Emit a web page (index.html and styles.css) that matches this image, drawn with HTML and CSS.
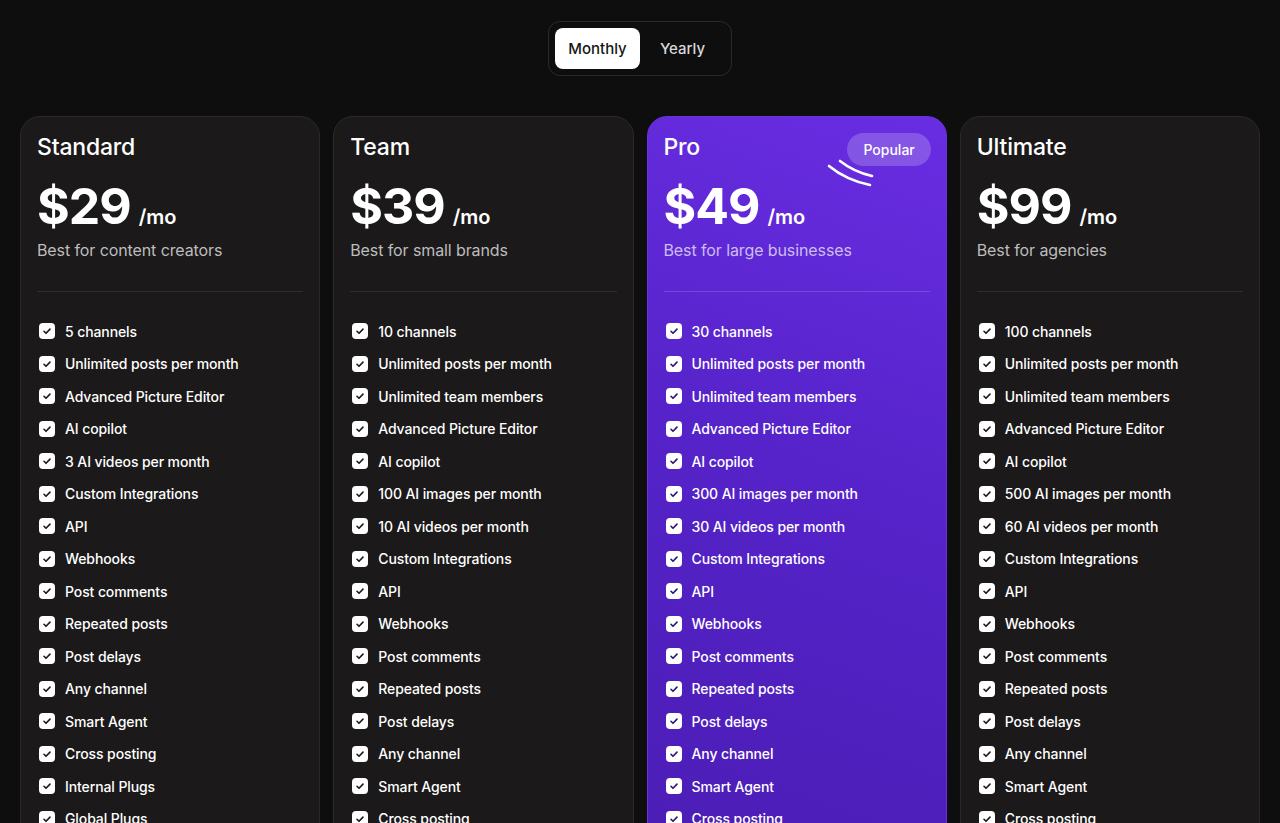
FILE: index.html
```html
<!DOCTYPE html>
<html lang="en">
<head>
<meta charset="utf-8">
<title>Pricing</title>
<link rel="stylesheet" href="styles.css">
</head>
<body>
<main class="page">
  <div class="toggle-wrap">
    <div class="toggle">
      <button class="toggle-btn active">Monthly</button>
      <button class="toggle-btn">Yearly</button>
    </div>
  </div>

  <section class="plans">
    <article class="card">
      <h2 class="plan-name">Standard</h2>
      <div class="price"><span class="amount">$29</span><span class="per">/mo</span></div>
      <p class="desc">Best for content creators</p>
      <hr class="divider">
      <ul class="features">
        <li><span class="check"><svg viewBox="0 0 16 16"><path d="M5 8.3l2 2 4-4.2"/></svg></span>5 channels</li>
        <li><span class="check"><svg viewBox="0 0 16 16"><path d="M5 8.3l2 2 4-4.2"/></svg></span>Unlimited posts per month</li>
        <li><span class="check"><svg viewBox="0 0 16 16"><path d="M5 8.3l2 2 4-4.2"/></svg></span>Advanced Picture Editor</li>
        <li><span class="check"><svg viewBox="0 0 16 16"><path d="M5 8.3l2 2 4-4.2"/></svg></span>AI copilot</li>
        <li><span class="check"><svg viewBox="0 0 16 16"><path d="M5 8.3l2 2 4-4.2"/></svg></span>3 AI videos per month</li>
        <li><span class="check"><svg viewBox="0 0 16 16"><path d="M5 8.3l2 2 4-4.2"/></svg></span>Custom Integrations</li>
        <li><span class="check"><svg viewBox="0 0 16 16"><path d="M5 8.3l2 2 4-4.2"/></svg></span>API</li>
        <li><span class="check"><svg viewBox="0 0 16 16"><path d="M5 8.3l2 2 4-4.2"/></svg></span>Webhooks</li>
        <li><span class="check"><svg viewBox="0 0 16 16"><path d="M5 8.3l2 2 4-4.2"/></svg></span>Post comments</li>
        <li><span class="check"><svg viewBox="0 0 16 16"><path d="M5 8.3l2 2 4-4.2"/></svg></span>Repeated posts</li>
        <li><span class="check"><svg viewBox="0 0 16 16"><path d="M5 8.3l2 2 4-4.2"/></svg></span>Post delays</li>
        <li><span class="check"><svg viewBox="0 0 16 16"><path d="M5 8.3l2 2 4-4.2"/></svg></span>Any channel</li>
        <li><span class="check"><svg viewBox="0 0 16 16"><path d="M5 8.3l2 2 4-4.2"/></svg></span>Smart Agent</li>
        <li><span class="check"><svg viewBox="0 0 16 16"><path d="M5 8.3l2 2 4-4.2"/></svg></span>Cross posting</li>
        <li><span class="check"><svg viewBox="0 0 16 16"><path d="M5 8.3l2 2 4-4.2"/></svg></span>Internal Plugs</li>
        <li><span class="check"><svg viewBox="0 0 16 16"><path d="M5 8.3l2 2 4-4.2"/></svg></span>Global Plugs</li>
      </ul>
    </article>

    <article class="card">
      <h2 class="plan-name">Team</h2>
      <div class="price"><span class="amount">$39</span><span class="per">/mo</span></div>
      <p class="desc">Best for small brands</p>
      <hr class="divider">
      <ul class="features">
        <li><span class="check"><svg viewBox="0 0 16 16"><path d="M5 8.3l2 2 4-4.2"/></svg></span>10 channels</li>
        <li><span class="check"><svg viewBox="0 0 16 16"><path d="M5 8.3l2 2 4-4.2"/></svg></span>Unlimited posts per month</li>
        <li><span class="check"><svg viewBox="0 0 16 16"><path d="M5 8.3l2 2 4-4.2"/></svg></span>Unlimited team members</li>
        <li><span class="check"><svg viewBox="0 0 16 16"><path d="M5 8.3l2 2 4-4.2"/></svg></span>Advanced Picture Editor</li>
        <li><span class="check"><svg viewBox="0 0 16 16"><path d="M5 8.3l2 2 4-4.2"/></svg></span>AI copilot</li>
        <li><span class="check"><svg viewBox="0 0 16 16"><path d="M5 8.3l2 2 4-4.2"/></svg></span>100 AI images per month</li>
        <li><span class="check"><svg viewBox="0 0 16 16"><path d="M5 8.3l2 2 4-4.2"/></svg></span>10 AI videos per month</li>
        <li><span class="check"><svg viewBox="0 0 16 16"><path d="M5 8.3l2 2 4-4.2"/></svg></span>Custom Integrations</li>
        <li><span class="check"><svg viewBox="0 0 16 16"><path d="M5 8.3l2 2 4-4.2"/></svg></span>API</li>
        <li><span class="check"><svg viewBox="0 0 16 16"><path d="M5 8.3l2 2 4-4.2"/></svg></span>Webhooks</li>
        <li><span class="check"><svg viewBox="0 0 16 16"><path d="M5 8.3l2 2 4-4.2"/></svg></span>Post comments</li>
        <li><span class="check"><svg viewBox="0 0 16 16"><path d="M5 8.3l2 2 4-4.2"/></svg></span>Repeated posts</li>
        <li><span class="check"><svg viewBox="0 0 16 16"><path d="M5 8.3l2 2 4-4.2"/></svg></span>Post delays</li>
        <li><span class="check"><svg viewBox="0 0 16 16"><path d="M5 8.3l2 2 4-4.2"/></svg></span>Any channel</li>
        <li><span class="check"><svg viewBox="0 0 16 16"><path d="M5 8.3l2 2 4-4.2"/></svg></span>Smart Agent</li>
        <li><span class="check"><svg viewBox="0 0 16 16"><path d="M5 8.3l2 2 4-4.2"/></svg></span>Cross posting</li>
        <li><span class="check"><svg viewBox="0 0 16 16"><path d="M5 8.3l2 2 4-4.2"/></svg></span>Internal Plugs</li>
        <li><span class="check"><svg viewBox="0 0 16 16"><path d="M5 8.3l2 2 4-4.2"/></svg></span>Global Plugs</li>
      </ul>
    </article>

    <article class="card card-pro">
      <span class="badge">Popular</span>
      <svg class="swoosh" viewBox="0 0 56 36"><path d="M5 13 Q 22 27 46 32"/><path d="M16 8 Q 30 19 48 23"/></svg>
      <h2 class="plan-name">Pro</h2>
      <div class="price"><span class="amount">$49</span><span class="per">/mo</span></div>
      <p class="desc">Best for large businesses</p>
      <hr class="divider">
      <ul class="features">
        <li><span class="check"><svg viewBox="0 0 16 16"><path d="M5 8.3l2 2 4-4.2"/></svg></span>30 channels</li>
        <li><span class="check"><svg viewBox="0 0 16 16"><path d="M5 8.3l2 2 4-4.2"/></svg></span>Unlimited posts per month</li>
        <li><span class="check"><svg viewBox="0 0 16 16"><path d="M5 8.3l2 2 4-4.2"/></svg></span>Unlimited team members</li>
        <li><span class="check"><svg viewBox="0 0 16 16"><path d="M5 8.3l2 2 4-4.2"/></svg></span>Advanced Picture Editor</li>
        <li><span class="check"><svg viewBox="0 0 16 16"><path d="M5 8.3l2 2 4-4.2"/></svg></span>AI copilot</li>
        <li><span class="check"><svg viewBox="0 0 16 16"><path d="M5 8.3l2 2 4-4.2"/></svg></span>300 AI images per month</li>
        <li><span class="check"><svg viewBox="0 0 16 16"><path d="M5 8.3l2 2 4-4.2"/></svg></span>30 AI videos per month</li>
        <li><span class="check"><svg viewBox="0 0 16 16"><path d="M5 8.3l2 2 4-4.2"/></svg></span>Custom Integrations</li>
        <li><span class="check"><svg viewBox="0 0 16 16"><path d="M5 8.3l2 2 4-4.2"/></svg></span>API</li>
        <li><span class="check"><svg viewBox="0 0 16 16"><path d="M5 8.3l2 2 4-4.2"/></svg></span>Webhooks</li>
        <li><span class="check"><svg viewBox="0 0 16 16"><path d="M5 8.3l2 2 4-4.2"/></svg></span>Post comments</li>
        <li><span class="check"><svg viewBox="0 0 16 16"><path d="M5 8.3l2 2 4-4.2"/></svg></span>Repeated posts</li>
        <li><span class="check"><svg viewBox="0 0 16 16"><path d="M5 8.3l2 2 4-4.2"/></svg></span>Post delays</li>
        <li><span class="check"><svg viewBox="0 0 16 16"><path d="M5 8.3l2 2 4-4.2"/></svg></span>Any channel</li>
        <li><span class="check"><svg viewBox="0 0 16 16"><path d="M5 8.3l2 2 4-4.2"/></svg></span>Smart Agent</li>
        <li><span class="check"><svg viewBox="0 0 16 16"><path d="M5 8.3l2 2 4-4.2"/></svg></span>Cross posting</li>
        <li><span class="check"><svg viewBox="0 0 16 16"><path d="M5 8.3l2 2 4-4.2"/></svg></span>Internal Plugs</li>
        <li><span class="check"><svg viewBox="0 0 16 16"><path d="M5 8.3l2 2 4-4.2"/></svg></span>Global Plugs</li>
      </ul>
    </article>

    <article class="card">
      <h2 class="plan-name">Ultimate</h2>
      <div class="price"><span class="amount">$99</span><span class="per">/mo</span></div>
      <p class="desc">Best for agencies</p>
      <hr class="divider">
      <ul class="features">
        <li><span class="check"><svg viewBox="0 0 16 16"><path d="M5 8.3l2 2 4-4.2"/></svg></span>100 channels</li>
        <li><span class="check"><svg viewBox="0 0 16 16"><path d="M5 8.3l2 2 4-4.2"/></svg></span>Unlimited posts per month</li>
        <li><span class="check"><svg viewBox="0 0 16 16"><path d="M5 8.3l2 2 4-4.2"/></svg></span>Unlimited team members</li>
        <li><span class="check"><svg viewBox="0 0 16 16"><path d="M5 8.3l2 2 4-4.2"/></svg></span>Advanced Picture Editor</li>
        <li><span class="check"><svg viewBox="0 0 16 16"><path d="M5 8.3l2 2 4-4.2"/></svg></span>AI copilot</li>
        <li><span class="check"><svg viewBox="0 0 16 16"><path d="M5 8.3l2 2 4-4.2"/></svg></span>500 AI images per month</li>
        <li><span class="check"><svg viewBox="0 0 16 16"><path d="M5 8.3l2 2 4-4.2"/></svg></span>60 AI videos per month</li>
        <li><span class="check"><svg viewBox="0 0 16 16"><path d="M5 8.3l2 2 4-4.2"/></svg></span>Custom Integrations</li>
        <li><span class="check"><svg viewBox="0 0 16 16"><path d="M5 8.3l2 2 4-4.2"/></svg></span>API</li>
        <li><span class="check"><svg viewBox="0 0 16 16"><path d="M5 8.3l2 2 4-4.2"/></svg></span>Webhooks</li>
        <li><span class="check"><svg viewBox="0 0 16 16"><path d="M5 8.3l2 2 4-4.2"/></svg></span>Post comments</li>
        <li><span class="check"><svg viewBox="0 0 16 16"><path d="M5 8.3l2 2 4-4.2"/></svg></span>Repeated posts</li>
        <li><span class="check"><svg viewBox="0 0 16 16"><path d="M5 8.3l2 2 4-4.2"/></svg></span>Post delays</li>
        <li><span class="check"><svg viewBox="0 0 16 16"><path d="M5 8.3l2 2 4-4.2"/></svg></span>Any channel</li>
        <li><span class="check"><svg viewBox="0 0 16 16"><path d="M5 8.3l2 2 4-4.2"/></svg></span>Smart Agent</li>
        <li><span class="check"><svg viewBox="0 0 16 16"><path d="M5 8.3l2 2 4-4.2"/></svg></span>Cross posting</li>
        <li><span class="check"><svg viewBox="0 0 16 16"><path d="M5 8.3l2 2 4-4.2"/></svg></span>Internal Plugs</li>
        <li><span class="check"><svg viewBox="0 0 16 16"><path d="M5 8.3l2 2 4-4.2"/></svg></span>Global Plugs</li>
      </ul>
    </article>
  </section>
</main>
</body>
</html>
```

FILE: styles.css
```css
* { box-sizing: border-box; }

html, body {
  margin: 0;
  padding: 0;
  background: #0e0e0e;
  color: #fff;
  font-family: Inter, "Noto Sans", "Liberation Sans", sans-serif;
}

.page {
  padding: 21px 20px 40px;
}

.toggle-wrap {
  display: flex;
  justify-content: center;
  margin-bottom: 40px;
}

.toggle {
  display: flex;
  padding: 6px;
  border: 1px solid #2a2a2a;
  border-radius: 12px;
  background: #0e0e0e;
}

.toggle-btn {
  width: 85px;
  height: 41px;
  border: 0;
  border-radius: 8px;
  background: transparent;
  color: #d9d9d9;
  font-family: inherit;
  font-size: 15px;
  font-weight: 500;
  cursor: pointer;
}

.toggle-btn.active {
  background: #fff;
  color: #161616;
}

.plans {
  display: grid;
  grid-template-columns: repeat(4, 1fr);
  gap: 13px;
  align-items: start;
}

.card {
  position: relative;
  background: #1b1919;
  border: 1px solid #2b2a2a;
  border-radius: 20px;
  padding: 14px 16px 24px;
}

.card-pro {
  background: linear-gradient(200deg, #692de2 0%, #5523c9 45%, #4a1cb2 100%);
  border-color: #6832dc;
}

.plan-name {
  margin: 0;
  font-size: 23px;
  line-height: 32px;
  font-weight: 500;
  letter-spacing: -0.2px;
}

.price {
  display: flex;
  align-items: baseline;
  gap: 8px;
  margin-top: 15px;
}

.amount {
  font-size: 50px;
  line-height: 56px;
  font-weight: 700;
  letter-spacing: -1px;
}

.per {
  font-size: 20px;
  font-weight: 600;
}

.desc {
  margin: 5px 0 0;
  font-size: 16px;
  line-height: 22px;
  color: #bdbdbd;
  letter-spacing: -0.1px;
}

.card-pro .desc { color: #cdbdf3; }

.divider {
  margin: 30px 0 0;
  border: 0;
  border-top: 1px solid #2e2d2d;
}

.card-pro .divider { border-top-color: rgba(255,255,255,0.16); }

.features {
  list-style: none;
  margin: 29px 0 0;
  padding: 0;
  display: flex;
  flex-direction: column;
  gap: 12.5px;
}

.features li {
  display: flex;
  align-items: center;
  gap: 10px;
  height: 20px;
  font-size: 14px;
  font-weight: 500;
  letter-spacing: -0.1px;
  padding-left: 2px;
}

.check {
  flex: none;
  width: 16px;
  height: 16px;
  border-radius: 4px;
  background: #fff;
  color: #1b1919;
  display: flex;
}

.card-pro .check { color: #2c1770; }

.check svg {
  width: 16px;
  height: 16px;
  fill: none;
  stroke: currentColor;
  stroke-width: 1.6;
  stroke-linecap: round;
  stroke-linejoin: round;
}

.badge {
  position: absolute;
  top: 16px;
  right: 15px;
  height: 33px;
  padding: 0 16px;
  display: flex;
  align-items: center;
  border-radius: 999px;
  background: rgba(255,255,255,0.2);
  font-size: 14px;
  font-weight: 500;
}

.swoosh {
  position: absolute;
  left: 176px;
  top: 36px;
  width: 56px;
  height: 36px;
  fill: none;
  stroke: #fff;
  stroke-width: 2.6;
  stroke-linecap: round;
}
```
